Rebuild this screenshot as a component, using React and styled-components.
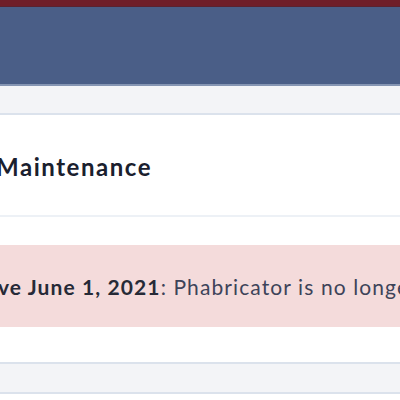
import React from "react";
import styled, { createGlobalStyle } from "styled-components";

const Global = createGlobalStyle`
  html, body { margin: 0; padding: 0; background: #ffffff; }
  body { font-family: Lato, "Noto Sans", sans-serif; overflow: hidden; }
`;

const Page = styled.div`
  width: 400px;
  height: 400px;
  overflow: hidden;
  display: flex;
  flex-direction: column;
`;

const TopStrip = styled.div`
  height: 6px;
  background: #6f1e29;
  border-bottom: 1px solid #5a2230;
`;

const MainBar = styled.div`
  height: 77px;
  background: #4a5e87;
  border-bottom: 2px solid #8595b3;
`;

const Crumbs = styled.div`
  height: 27px;
  background: #f3f4f7;
  border-bottom: 2px solid #dbe2ec;
`;

const HeaderBox = styled.div`
  height: 98px;
  display: flex;
  align-items: center;
  padding-top: 2px;
  border-bottom: 2px solid #edf1f6;
  overflow: hidden;
`;

const Title = styled.h1`
  margin: 0 0 0 -4px;
  font-family: Lato, "Noto Sans", sans-serif;
  font-weight: 700;
  font-size: 24px;
  letter-spacing: 1.55px;
  color: #1a202e;
  white-space: nowrap;
`;

const Notice = styled.div`
  margin-top: 28px;
  height: 82px;
  background: #f4dbdb;
  display: flex;
  align-items: center;
  overflow: hidden;
`;

const NoticeText = styled.p`
  margin: 0 0 0 -2px;
  font-family: Lato, "Noto Sans", sans-serif;
  font-size: 21px;
  letter-spacing: 1.1px;
  color: #3d4359;
  white-space: nowrap;
  b { color: #262a37; font-weight: 700; }
`;

const Footer = styled.div`
  margin-top: 35px;
  height: 28px;
  background: #f3f4f7;
  border-top: 2px solid #dbe2ec;
  border-bottom: 2px solid #dbe2ec;
`;

export default function App() {
  return (
    <>
      <Global />
      <Page>
        <TopStrip />
        <MainBar />
        <Crumbs />
        <HeaderBox>
          <Title>Maintenance</Title>
        </HeaderBox>
        <Notice>
          <NoticeText>
            <b>ve June 1, 2021</b>: Phabricator is no longer actively maintained.
          </NoticeText>
        </Notice>
        <Footer />
      </Page>
    </>
  );
}
